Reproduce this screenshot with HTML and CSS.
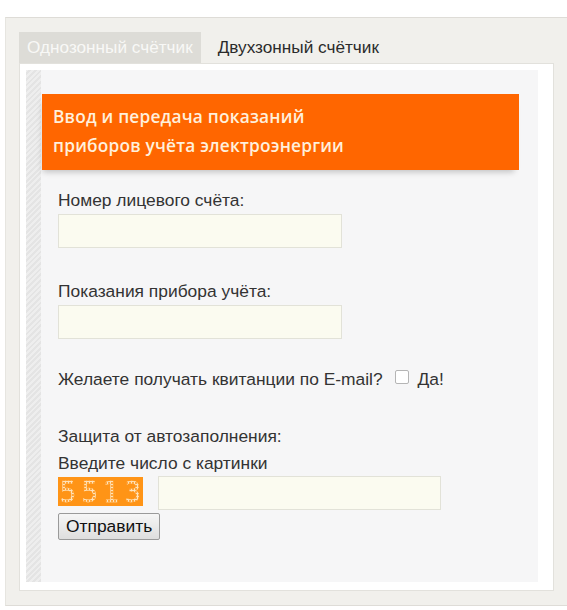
FILE: index.html
```html
<!DOCTYPE html>
<html lang="ru">
<head>
<meta charset="utf-8">
<title>Передача показаний</title>
<link rel="stylesheet" href="styles.css">
</head>
<body>
<div class="widget">
  <div class="tabs">
    <div class="tab tab-active">Однозонный счётчик</div>
    <div class="tab">Двухзонный счётчик</div>
  </div>
  <div class="panel">
    <div class="inner">
      <div class="stripe"></div>
      <div class="content">
        <div class="header">Ввод и передача показаний<br>приборов учёта электроэнергии</div>
        <form class="form">
          <label class="label first">Номер лицевого счёта:</label>
          <input class="field" type="text">
          <label class="label">Показания прибора учёта:</label>
          <input class="field" type="text">
          <div class="email-row">
            <span>Желаете получать квитанции по E-mail?</span>
            <span class="check"></span>
            <span>Да!</span>
          </div>
          <div class="label protect">Защита от автозаполнения:</div>
          <div class="label hint">Введите число с картинки</div>
          <div class="captcha-row">
            <div class="captcha"><span class="captcha-text">5513</span></div>
            <input class="field captcha-field" type="text">
          </div>
          <button class="submit" type="button">Отправить</button>
        </form>
      </div>
    </div>
  </div>
</div>
</body>
</html>
```
FILE: styles.css
```css
html, body {
  margin: 0;
  padding: 0;
  background: #ffffff;
}
body {
  font-family: "Liberation Sans", Arial, sans-serif;
  color: #333333;
}
.widget {
  margin: 17px 0 0 5px;
  background: #f1f0ec;
  border-top: 1px solid #dedcd7;
  border-left: 1px solid #e6e5e0;
  border-bottom: 1px solid #dedcd7;
  padding: 14px 13px 12px 13px;
  height: 561px;
}
.tabs {
  display: flex;
  height: 31px;
}
.tab {
  font-size: 17.2px;
  line-height: 31px;
  padding: 0 8px;
  color: #2b2b2b;
}
.tab-active {
  background: #dddcd7;
  color: #f8f8f6;
  margin-right: 9px;
}
.panel {
  background: #ffffff;
  border: 1px solid #e2e1dc;
  padding: 6px 15px 8px 6px;
  width: 512px;
}
.inner {
  display: flex;
  background: #f6f6f7;
  height: 512px;
}
.stripe {
  width: 15px;
  flex: none;
  background: repeating-linear-gradient(135deg, #eeeeee 0 2px, #e4e4e4 2px 4px);
}
.content {
  flex: 1;
  padding: 24px 19px 0 1px;
}
.header {
  background: #ff6600;
  color: #fff0dc;
  font-family: "Open Sans", sans-serif;
  font-weight: 600;
  font-size: 17.3px;
  line-height: 29px;
  letter-spacing: 0.2px;
  padding: 8px 10px 10px 11px;
  box-shadow: -2px 5px 6px -3px rgba(0, 0, 0, 0.22);
}
.form {
  display: flex;
  flex-direction: column;
  align-items: flex-start;
  padding-left: 16px;
}
.label {
  display: block;
  font-size: 17.4px;
  line-height: 20px;
  color: #333333;
  margin-top: 33px;
  margin-bottom: 4px;
}
.label.first {
  margin-top: 20px;
}
.field {
  box-sizing: border-box;
  width: 284px;
  height: 34px;
  margin: 0;
  background: #fbfbf0;
  border: 1px solid #e2e2d8;
  font-size: 16px;
}
.email-row {
  display: flex;
  align-items: center;
  font-size: 17.4px;
  line-height: 20px;
  margin-top: 30px;
}
.check {
  display: inline-block;
  width: 12px;
  height: 12px;
  border: 1px solid #b5b5b5;
  border-radius: 2px;
  background: #ffffff;
  margin: 0 9px 0 12px;
  position: relative;
  top: -2px;
}
.label.protect {
  margin-top: 37px;
  margin-bottom: 0;
}
.label.hint {
  margin-top: 7px;
  margin-bottom: 3px;
}
.captcha-row {
  display: flex;
  align-items: flex-start;
  gap: 15px;
}
.captcha {
  width: 85px;
  height: 29px;
  margin-top: 1px;
  background: #ff9416;
  display: flex;
  align-items: center;
  justify-content: center;
}
.captcha-text {
  font-family: "DejaVu Sans Condensed", "DejaVu Sans", sans-serif;
  font-size: 29px;
  line-height: 30px;
  letter-spacing: 5px;
  padding-left: 5px;
  background: radial-gradient(circle, #ffe4bc 0 1.1px, transparent 1.5px) 0 0 / 3px 3px;
  -webkit-background-clip: text;
  background-clip: text;
  color: transparent;
  -webkit-text-stroke: 0.3px rgba(255, 214, 160, 0.5);
}
.captcha-field {
  width: 283px;
}
.submit {
  margin-top: 3px;
  height: 27px;
  padding: 0 7px;
  font-family: "Liberation Sans", Arial, sans-serif;
  font-size: 17.4px;
  color: #111111;
  background: linear-gradient(#f6f6f6, #dedede);
  border: 1px solid #9a9a9a;
  border-radius: 2px;
}
```
